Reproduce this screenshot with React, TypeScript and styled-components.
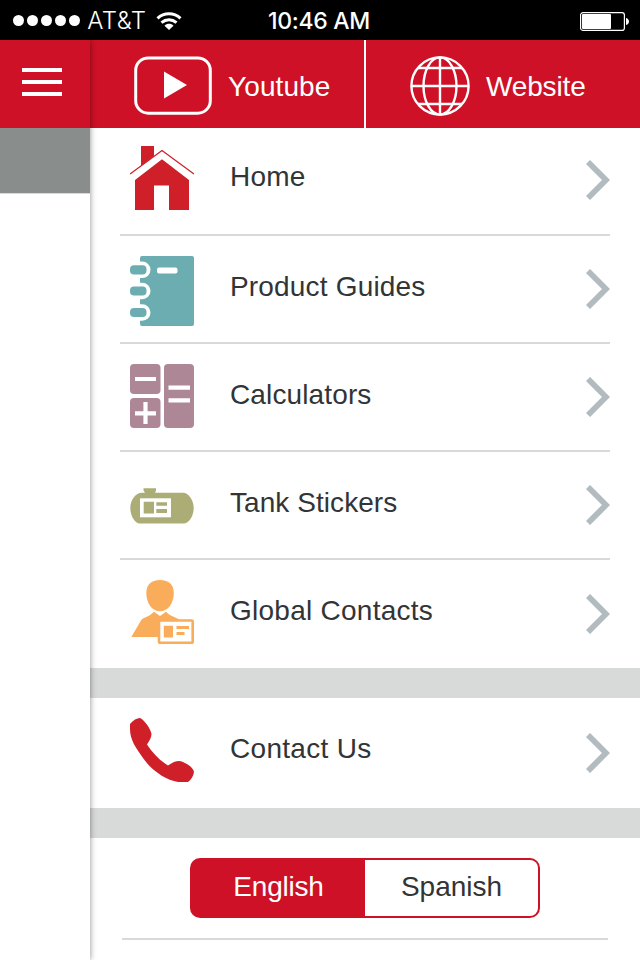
import React from "react";
import styled, { createGlobalStyle } from "styled-components";

const RED = "#ce1126";

const GlobalStyle = createGlobalStyle`
  * { box-sizing: border-box; }
  body { margin: 0; background: #fff; }
`;

const Screen = styled.div`
  width: 640px;
  height: 960px;
  display: flex;
  flex-direction: column;
  overflow: hidden;
  background: #fff;
  color: #333435;
  font-family: "Liberation Sans", Arial, sans-serif;
  font-size: 28px;
`;

const StatusBar = styled.header`
  flex: none;
  height: 40px;
  display: grid;
  grid-template-columns: 1fr auto 1fr;
  align-items: center;
  padding: 0 11px 0 13px;
  background: #000;
  color: #fff;
`;

const Carrier = styled.div`
  display: flex;
  align-items: center;
`;

const SignalDots = styled.div`
  display: flex;
  gap: 2.6px;
  margin-right: 7px;
`;

const Dot = styled.span`
  width: 11.4px;
  height: 11.4px;
  border-radius: 50%;
  background: #fff;
`;

const CarrierName = styled.span`
  width: 59px;
  margin-right: 10px;
  font: 300 24px/40px Inter, sans-serif;
  letter-spacing: 0.4px;
  padding-top: 1px;
  white-space: nowrap;
`;

const Clock = styled.span`
  font: 500 23px/40px Inter, sans-serif;
  margin-right: 4px;
  padding-top: 1px;
  white-space: nowrap;
  letter-spacing: -0.3px;
`;

const BatteryIcon = styled.svg`
  justify-self: end;
`;

const Body = styled.div`
  flex: 1;
  min-height: 0;
  display: flex;
`;

const PageEdge = styled.aside`
  width: 90px;
  flex: none;
  position: relative;
  z-index: 1;
  background: #fff;
  box-shadow: 0 0 6px rgba(0, 0, 0, 0.45);
  clip-path: inset(0 -10px 0 0);
`;

const MenuButton = styled.button`
  display: flex;
  flex-direction: column;
  gap: 8px;
  width: 90px;
  height: 88px;
  padding: 28px 28px 0 22px;
  border: 0;
  background: ${RED};
`;

const MenuBar = styled.span`
  width: 40px;
  height: 4px;
  flex: none;
  background: #fff;
`;

const PageTitleStrip = styled.div`
  height: 66px;
  background: #898d8b;
  border-bottom: 1px solid #d8dad9;
`;

const Drawer = styled.main`
  width: 550px;
`;

const LinkBar = styled.nav`
  display: grid;
  grid-template-columns: 276px 1fr;
  height: 88px;
  background: ${RED};
  color: #fff;
`;

const TopLink = styled.a<{ $divided?: boolean }>`
  display: flex;
  align-items: flex-start;
  padding: 16px 0 0 44px;
  border-right: ${(p) => (p.$divided ? "2px solid #fff" : "0")};
`;

const TopLabel = styled.span<{ $spacing: number }>`
  margin-left: 16px;
  line-height: 32px;
  padding-top: 15px;
  letter-spacing: ${(p) => p.$spacing}px;
`;

const MenuRow = styled.a<{ $last?: boolean; $height?: number }>`
  display: flex;
  align-items: flex-start;
  height: ${(p) => p.$height ?? 108}px;
  margin: 0 30px;
  padding-left: 10px;
  border-bottom: ${(p) => (p.$last ? "0" : "2px solid #d8d9d9")};
`;

const RowIcon = styled.svg<{ $top: number }>`
  flex: none;
  width: 64px;
  margin-top: ${(p) => p.$top}px;
`;

const RowLabel = styled.span<{ $top: number; $spacing: number }>`
  flex: 1;
  margin: ${(p) => p.$top}px 0 0 36px;
  line-height: 32px;
  letter-spacing: ${(p) => p.$spacing}px;
  white-space: nowrap;
`;

const Chevron = styled.svg<{ $top: number }>`
  flex: none;
  margin-top: ${(p) => p.$top}px;
`;

const Band = styled.div`
  height: 30px;
  background: #d8dad9;
`;

const LanguageSection = styled.section`
  margin: 0 32px;
  height: 102px;
  padding-top: 20px;
  border-bottom: 2px solid #d8d9d9;
`;

const Segmented = styled.div`
  display: grid;
  grid-template-columns: 1fr 1fr;
  width: 350px;
  height: 60px;
  margin-left: 68px;
  padding: 2px;
  border-radius: 10px;
  background: ${RED};
`;

const Segment = styled.button<{ $active?: boolean }>`
  border: 0;
  border-radius: 0 8px 8px 0;
  padding: 0 0 2px;
  font: inherit;
  letter-spacing: ${(p) => (p.$active ? -0.2 : 0)}px;
  color: ${(p) => (p.$active ? "#fff" : "#333435")};
  background: ${(p) => (p.$active ? "transparent" : "#fff")};
`;

const HomeArt = () => (
  <g fill="#cf2029">
    <path d="M11 0H24V10L11 20Z" />
    <path d="M5 34L32 13.3L59 34V64H39V39.5H24V64H5Z" />
    <path d="M0 28L32 4.3L64 28" fill="none" stroke="#fff" strokeWidth="3" transform="translate(0 3)" />
    <path d="M0 28L32 4.5L64 28" fill="none" stroke="#cf2029" strokeWidth="1.3" />
  </g>
);

const GuideArt = () => (
  <g>
    <rect x="10" width="54" height="70" rx="2" fill="#6badb1" />
    {[13.8, 35, 56.5].map((y) => (
      <g key={y}>
        <rect x="-4" y={y - 8.3} width="24.5" height="16.6" rx="8.3" fill="#fff" />
        <rect y={y - 4.6} width="16.5" height="9.2" rx="4" fill="#6badb1" />
      </g>
    ))}
    <rect x="27" y="11.5" width="20.5" height="6" rx="2" fill="#fff" />
  </g>
);

const CalculatorArt = () => (
  <g>
    <g fill="#ae8797">
      <rect width="30.5" height="30" rx="4" />
      <rect y="34" width="30.5" height="30" rx="4" />
      <rect x="34" width="30" height="64" rx="4" />
    </g>
    <path
      d="M5 15H26M5 49.3H26M15.5 38V60M38.5 23.7H60M38.5 36.3H60"
      stroke="#fff"
      strokeWidth="4.2"
    />
  </g>
);

const TankArt = () => (
  <g fill="#acad76">
    <path d="M13.5 16.3H26V18.5L25 20.7H53C58.5 20.7 63.7 28 63.7 36S59 51.5 53.5 51.5H10C5 51.5 .3 44 .3 36S5.5 20.7 12 20.7H15L13.5 18.5Z" />
    <rect x="10" y="26.3" width="31" height="19" fill="#fff" />
    <path d="M13.7 29.7H24V41.6H13.7ZM26.3 30.3H37V33.8H26.3ZM26.3 37H37V41H26.3Z" />
  </g>
);

const ContactArt = () => (
  <g fill="#f9ac59">
    <path d="M30 0C39 0 43.8 5 43.8 13C43.8 23 38 31.3 30 31.3S16.3 23 16.3 13C16.3 5 21 0 30 0Z" />
    <path d="M24 31.8L30 36L36 31.8C40 36 45 37 49 39.5L60 57H1.3L11 40.5C12 39 12.5 38.5 14 38C18 36.5 21 35 24 31.8Z" />
    <rect x="29" y="40.5" width="33.7" height="22.3" rx="1" fill="#fff" stroke="#f9ac59" strokeWidth="2.6" />
    <path d="M33.8 45.8H43V57.5H33.8ZM46.5 46H59V49H46.5ZM46.5 52H54.5V55H46.5Z" />
  </g>
);

const PhoneArt = () => (
  <path
    fill="#cf2029"
    d="M0 6C3 2 7 0 10 0C13 .5 21 11 21.5 16C21.5 20 19 23 17 26.5C22 34 29 42 38 47.5C42 45 45 43 49 43C55 43.5 64 50 64 54C63.5 58 61 62 58 64H48C36 62 22 53 13 40C6 30 0 22 0 11Z"
  />
);

interface Item {
  label: string;
  Art: () => React.JSX.Element;
  height: number;
  icon: number;
  text: number;
  arrow: number;
  spacing: number;
}

const menuItems: Item[] = [
  { label: "Home", Art: HomeArt, height: 64, icon: 18, text: 33, arrow: 32, spacing: 0.2 },
  { label: "Product Guides", Art: GuideArt, height: 70, icon: 20, text: 35, arrow: 33, spacing: 0.18 },
  { label: "Calculators", Art: CalculatorArt, height: 64, icon: 20, text: 35, arrow: 33, spacing: 0.13 },
  { label: "Tank Stickers", Art: TankArt, height: 64, icon: 20, text: 35, arrow: 33, spacing: 0.06 },
  { label: "Global Contacts", Art: ContactArt, height: 64, icon: 20, text: 35, arrow: 34, spacing: 0.26 },
];

const contactItem: Item = {
  label: "Contact Us",
  Art: PhoneArt,
  height: 64,
  icon: 20,
  text: 35,
  arrow: 35,
  spacing: 0.3,
};

const RowContent = ({ item }: { item: Item }) => (
  <>
    <RowIcon $top={item.icon} height={item.height} viewBox={`0 0 64 ${item.height}`}>
      <item.Art />
    </RowIcon>
    <RowLabel $top={item.text} $spacing={item.spacing}>
      {item.label}
    </RowLabel>
    <Chevron $top={item.arrow} width="24" height="40" viewBox="0 0 24 40">
      <path d="M2 2L20 20L2 38" fill="none" stroke="#b2bbc0" strokeWidth="5.8" />
    </Chevron>
  </>
);

export default function App() {
  return (
    <Screen>
      <GlobalStyle />
      <StatusBar>
        <Carrier>
          <SignalDots>
            {[0, 1, 2, 3, 4].map((n) => (
              <Dot key={n} />
            ))}
          </SignalDots>
          <CarrierName>AT&amp;T</CarrierName>
          <svg width="26" height="18" viewBox="0 0 26 18">
            <g fill="none" stroke="#fff" strokeWidth="3">
              <path d="M1.5 6.3C8 .2 18 .2 24.5 6.3" />
              <path d="M5.5 10.7C10 6.8 16 6.8 20.5 10.7" />
            </g>
            <path d="M8.5 13.7C11 11.2 15 11.2 17.5 13.7L13 18Z" fill="#fff" />
          </svg>
        </Carrier>
        <Clock>10:46 AM</Clock>
        <BatteryIcon width="49" height="20" viewBox="0 0 49 20">
          <rect x=".6" y="1.6" width="43.8" height="17.8" rx="2.5" fill="none" stroke="#fff" strokeWidth="1.2" />
          <rect x="2" y="3" width="29" height="15" rx="1" fill="#fff" />
          <path d="M46 7C50 8 50 13 46 14Z" fill="#fff" />
        </BatteryIcon>
      </StatusBar>
      <Body>
        <PageEdge>
          <MenuButton aria-label="Menu">
            <MenuBar />
            <MenuBar />
            <MenuBar />
          </MenuButton>
          <PageTitleStrip />
        </PageEdge>
        <Drawer>
          <LinkBar>
            <TopLink $divided>
              <svg width="78" height="59" viewBox="0 0 78 59">
                <rect x="1.7" y="1.9" width="74.6" height="55.3" rx="12.5" fill="none" stroke="#fff" strokeWidth="3" />
                <path d="M30 15.5L53 29L30 42.5Z" fill="#fff" />
              </svg>
              <TopLabel $spacing={0.1}>Youtube</TopLabel>
            </TopLink>
            <TopLink>
              <svg width="60" height="60" viewBox="0 0 60 60" fill="none" stroke="#fff" strokeWidth="2.4">
                <circle cx="30" cy="30" r="28.6" />
                <ellipse cx="30" cy="30" rx="16.5" ry="28.6" />
                <path d="M30 1V59M1 30H59M8 12H52M8 48H52" />
              </svg>
              <TopLabel $spacing={-0.15}>Website</TopLabel>
            </TopLink>
          </LinkBar>
          {menuItems.map((item, i) => (
            <MenuRow key={item.label} $last={i === menuItems.length - 1}>
              <RowContent item={item} />
            </MenuRow>
          ))}
          <Band />
          <MenuRow $last $height={110}>
            <RowContent item={contactItem} />
          </MenuRow>
          <Band />
          <LanguageSection>
            <Segmented>
              <Segment $active>English</Segment>
              <Segment>Spanish</Segment>
            </Segmented>
          </LanguageSection>
        </Drawer>
      </Body>
    </Screen>
  );
}
